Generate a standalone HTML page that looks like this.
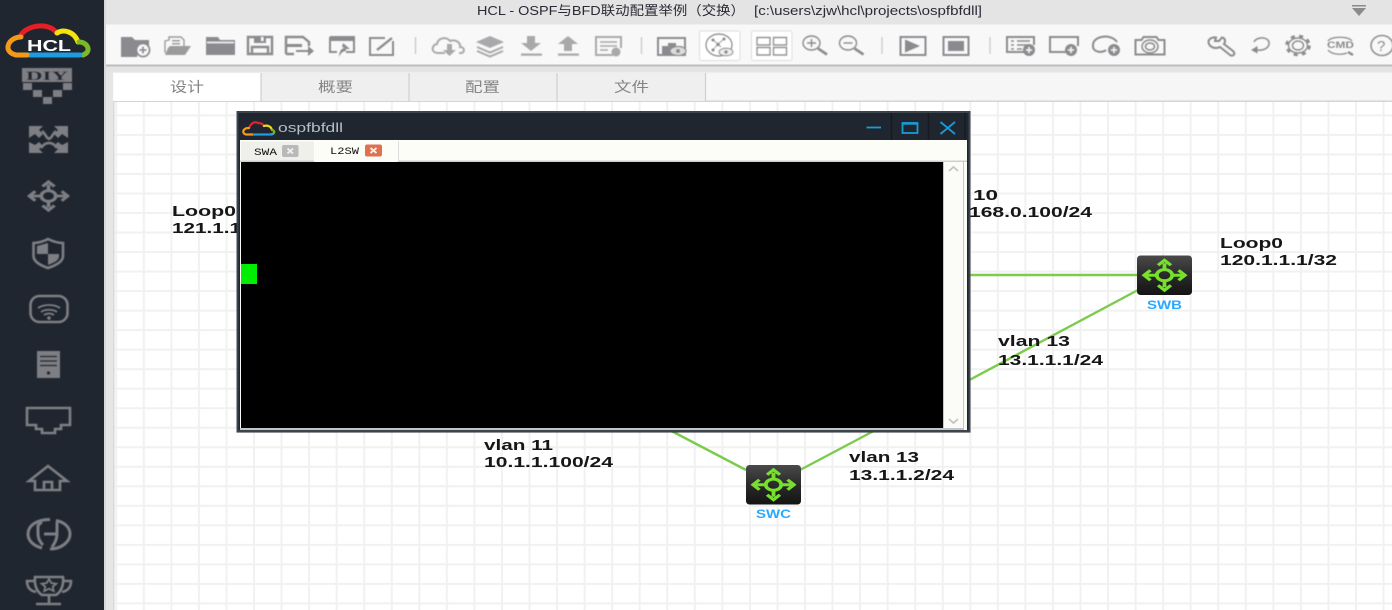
<!DOCTYPE html>
<html><head><meta charset="utf-8"><title>HCL</title>
<style>
html,body{margin:0;padding:0;background:#fff;width:1392px;height:610px;overflow:hidden}
svg{display:block}
text{font-family:"Liberation Sans","Noto Sans CJK SC",sans-serif}
.lb{font-weight:bold;font-size:15px;fill:#161616;letter-spacing:0}
.tab{font-size:14px;fill:#858585}
.ic{fill:none;stroke:#8b8b8f;stroke-width:2}
.f{fill:#8b8b8f;stroke:none}
.s{fill:none;stroke:#7d7f84;stroke-width:2.6}
.sf{fill:#7d7f84;stroke:none}
.ln{stroke:#7ccb4c;stroke-width:2.4;fill:none}
</style></head><body>
<svg width="1392" height="610" viewBox="0 0 1392 610" xmlns="http://www.w3.org/2000/svg">
<defs>
<linearGradient id="dev" x1="0" y1="0" x2="0" y2="1"><stop offset="0" stop-color="#4a4a4a"/><stop offset=".5" stop-color="#2a2a2a"/><stop offset="1" stop-color="#141414"/></linearGradient>
<filter id="b"><feGaussianBlur stdDeviation="0.45"/></filter>
<filter id="t"><feGaussianBlur stdDeviation="0.3"/></filter>
<pattern id="grid" x="142.8" y="212" width="27.55" height="19.52" patternUnits="userSpaceOnUse">
<rect width="27.55" height="19.52" fill="#fff"/>
<rect x="0" width="2" height="19.52" fill="#f1f1f1"/><rect y="0" width="27.55" height="2" fill="#f1f1f1"/>
</pattern>
<g id="mv">
<ellipse cx="0" cy="0" rx="6" ry="5.6" fill="none" stroke="currentColor" stroke-width="3"/>
<path d="M0-6V-12M0 6V12M-6 0H-14M6 0H14" stroke="currentColor" stroke-width="3" fill="none"/>
<path d="M-6-11 0-17 6-11 4-9 0-13-4-9ZM-6 11 0 17 6 11 4 9 0 13-4 9ZM-12-6-18 0-12 6-10 4-14 0-10-4ZM12-6 18 0 12 6 10 4 14 0 10-4Z" fill="currentColor"/>
</g>
<g id="sw">
<rect x="0" y="0" width="55" height="39.5" rx="3.5" fill="url(#dev)"/>
<g transform="translate(27.5,19.7) scale(1.28,1)" style="color:#76e02c"><use href="#mv"/></g>
</g>
</defs>

<!-- backgrounds -->
<rect x="104" y="0" width="1288" height="610" fill="#e6e6e6"/>
<rect x="104" y="0" width="1288" height="24.5" fill="#e4e4e4"/>
<rect x="104" y="24.5" width="1288" height="40" fill="#f8f8f8"/>
<rect x="104" y="64.5" width="1288" height="2" fill="#bdbdbd"/>
<rect x="104" y="66.5" width="1288" height="6" fill="#e4e4e4"/>
<rect x="113" y="72.5" width="1279" height="29" fill="#f6f6f6"/>
<rect x="113" y="101" width="1279" height="509" fill="url(#grid)"/>
<rect x="113" y="100.5" width="1279" height="1.5" fill="#d4d4d4"/>
<rect x="113" y="101" width="1.5" height="509" fill="#d8d8d8"/>
<rect x="104" y="0" width="2" height="610" fill="#d8d8d8"/>

<!-- tabs -->
<rect x="113.500" y="73" width="147.500" height="28" fill="#fff"/>
<rect x="261" y="73" width="444.500" height="28" fill="#efefef"/>
<path d="M261 73V101M409 73V101M557 73V101M705.500 73V101" stroke="#cfcfcf" stroke-width="1.2"/>
<text class="tab" x="170" y="92" textLength="34" lengthAdjust="spacingAndGlyphs" filter="url(#t)">设计</text>
<text class="tab" x="318" y="92" textLength="35" lengthAdjust="spacingAndGlyphs" filter="url(#t)">概要</text>
<text class="tab" x="465" y="92" textLength="35" lengthAdjust="spacingAndGlyphs" filter="url(#t)">配置</text>
<text class="tab" x="614" y="92" textLength="35" lengthAdjust="spacingAndGlyphs" filter="url(#t)">文件</text>

<!-- title -->
<text x="477" y="15" font-size="13" fill="#2c2c36" textLength="268" lengthAdjust="spacingAndGlyphs" filter="url(#t)">HCL - OSPF与BFD联动配置举例（交换）</text>
<text x="754" y="15" font-size="13" fill="#2c2c36" textLength="228" lengthAdjust="spacingAndGlyphs" filter="url(#t)">[c:\users\zjw\hcl\projects\ospfbfdll]</text>
<path d="M1352 5h14v1.500h-14zM1352 8h14l-7 8z" fill="#8b8b8f"/>

<!-- toolbar icons -->
<g filter="url(#b)">
<path class="f" d="M121 37h11l3 3h14v11h-7a7 7 0 0 0-5 6h-16z"/>
<circle cx="143" cy="50" r="6.500" fill="#f8f8f8" stroke="#8b8b8f" stroke-width="1.800"/><path d="M139.500 50h7M143 46.500v7" stroke="#8b8b8f" stroke-width="1.800"/>
<g opacity=".85"><path class="ic" style="stroke-width:1.400" d="M165 53V41l4-1V37h12l3 3v6"/><path class="f" d="M170 46h21l-6 9h-20l3-7z"/><path class="f" d="M172 40h8v1.500h-8zM172 43h8v1.500h-8z"/></g>
<path class="f" d="M206 37h12l2 3h15v15h-29zM208 42v0"/><path d="M207 42.500h27" stroke="#f8f8f8" stroke-width="1.500"/>
<path class="ic" style="stroke-width:2.400" d="M248 37h24v17h-24zM252 54v-7h16v7"/><rect class="f" x="254" y="36" width="12" height="7"/><rect x="261" y="37" width="2.500" height="4" fill="#f8f8f8"/>
<path class="ic" style="stroke-width:2.400" d="M286 54V37h17l6 5v4M286 54h8"/><path d="M287 45.500h15" class="ic" style="stroke-width:3"/><path d="M296 51h14" class="ic"/><path class="f" d="M308 46l6 5-6 5z"/>
<path class="ic" d="M330 37h24v15h-8M330 37v15h7"/><rect class="f" x="330" y="36.500" width="24" height="4.500"/><path class="f" d="M343 43l7 6h-4v2c-2 0-5 1-7 6 0-5 2-9 6-9v0l-3-1z"/>
<path class="ic" d="M393 41v14h-23V38h15"/><path d="M377 50l15-12" stroke="#8b8b8f" stroke-width="2.400" fill="none"/>
<path d="M415.500 37v17" stroke="#c4c4c4" stroke-width="1.200"/>
<g opacity=".72">
<path class="ic" d="M445 53h-7c-7 0-7-8-1-9 1-6 9-8 13-3 6-2 11 2 10 6 5 0 5 6 1 6h-2"/><path class="f" d="M447 44h5v6h4l-6.500 6-6.500-6h4z"/>
<path class="f" d="M490 36l14 6-14 6-14-6z"/><path class="ic" style="stroke-width:2" d="M477 47l13 5.500 13-5.500M477 51l13 5.500 13-5.500"/>
<path class="f" d="M527 36h8v7h6l-10 8-10-8h6zM521 53.500h21v2.200h-21z"/>
<path class="f" d="M568 36l10 8h-6v7h-8v-7h-6zM558 53.500h21v2.200h-21z"/>
<path class="ic" d="M613 55h-17V37h25v11"/><path class="ic" style="stroke-width:1.500" d="M600 42h17M600 46h17M600 50h8"/><circle cx="616" cy="52" r="4.500" fill="#8b8b8f"/>
</g>
<path d="M641.500 37v17" stroke="#c4c4c4" stroke-width="1.200"/>
<path class="ic" d="M658 38h27v17h-27z"/><path class="f" d="M662 51v-5h6v-3h8v3h6v5h-3v4h-17z"/><ellipse cx="678" cy="51" rx="8" ry="4.500" fill="#dcdcdc" stroke="#8b8b8f" stroke-width="1.200"/><circle cx="678" cy="51" r="2" fill="#8b8b8f"/>
<rect x="699.500" y="31" width="40.500" height="29.500" rx="2" fill="#fff" stroke="#dcdcdc"/>
<ellipse cx="719" cy="45" rx="13" ry="11" class="ic" style="stroke-width:1.400"/><path class="ic" style="stroke-width:.9" d="M713 40l5 4 6-5M713 50l5-6 3 3"/><circle cx="713" cy="40" r="1.600" fill="#8b8b8f"/><circle cx="724" cy="39" r="1.600" fill="#8b8b8f"/><circle cx="713" cy="50" r="1.600" fill="#8b8b8f"/><circle cx="718" cy="44.500" r="1.800" fill="#8b8b8f"/><ellipse cx="726" cy="52" rx="7" ry="3.800" fill="#eee" stroke="#8b8b8f" stroke-width="1.100"/><circle cx="726" cy="52" r="1.700" fill="#8b8b8f"/>
<rect x="751.500" y="31" width="40.500" height="29.500" rx="2" fill="#fff" stroke="#dcdcdc"/>
<path class="ic" style="stroke-width:1.400" d="M757 37.500h13v7.500h-13zM773.500 37.500h13v7.500h-13zM757 47.500h13v7.500h-13zM773.500 47.500h13v7.500h-13z"/>
<ellipse cx="811.500" cy="43" rx="8.500" ry="7" class="ic" style="stroke-width:1.400"/><path class="ic" style="stroke-width:1.400" d="M807 43h9M811.500 39v8"/><path d="M818 48.500l9 6" stroke="#8b8b8f" stroke-width="2.600"/>
<ellipse cx="848" cy="43" rx="8.500" ry="7" class="ic" style="stroke-width:1.400"/><path class="ic" style="stroke-width:1.400" d="M843.500 43h9"/><path d="M854.500 48.500l9 6" stroke="#8b8b8f" stroke-width="2.600"/>
<path d="M882 37v17" stroke="#c4c4c4" stroke-width="1.200"/>
<path class="ic" d="M900.500 37h25v18h-25z"/><path class="f" d="M905 39.500l15 6.500-15 6.500z"/>
<path class="ic" d="M943.500 37h25v18h-25z"/><rect class="f" x="948" y="41" width="16" height="10"/>
<path d="M990 37v17" stroke="#c4c4c4" stroke-width="1.200"/>
<path class="ic" d="M1025 52h-18V37h27v8"/><path class="ic" style="stroke-width:1.500" d="M1011 41h3M1011 45h3M1011 49h3M1017 41h13M1017 45h11M1017 49h5"/><circle cx="1029" cy="50" r="6" fill="#8b8b8f"/><path d="M1026 50h6M1029 47v6" stroke="#f8f8f8" stroke-width="1.500"/>
<path class="ic" d="M1067 52h-17V37h28v9"/><circle cx="1071" cy="50" r="6" fill="#8b8b8f"/><path d="M1068 50h6M1071 47v6" stroke="#f8f8f8" stroke-width="1.500"/>
<path class="ic" d="M1106 50c-3 3-14 3-13-5 0-9 18-12 24-3"/><circle cx="1114" cy="50" r="6" fill="#8b8b8f"/><path d="M1111 50h6M1114 47v6" stroke="#f8f8f8" stroke-width="1.500"/>
<path class="ic" d="M1135.500 40h6l2-3h13l2 3h6v14.500h-29z"/><ellipse cx="1150" cy="46.500" rx="8" ry="6.500" class="ic" style="stroke-width:1.500"/><ellipse cx="1150" cy="46.500" rx="4.500" ry="3.500" class="ic" style="stroke-width:1.500"/>
<path class="ic" d="M1216 37.500C1211 37 1207 40 1209 44C1211 48 1216 49 1220 47L1230 55C1233 57 1236 54 1233 51L1224 44C1226 41 1225 38 1222 37.500L1219 41L1215 41Z"/>
<path class="ic" style="stroke-width:1.500" d="M1254 42c2-5 13-6 15 0 1 6-6 9-12 8"/><path class="f" d="M1251 50l6.500-4v7.500z"/>
<ellipse cx="1298" cy="45.500" rx="5.500" ry="4.500" class="ic" style="stroke-width:1.400"/><ellipse cx="1298" cy="45.500" rx="9.500" ry="7.500" class="ic" style="stroke-width:1.400"/><ellipse cx="1298" cy="45.500" rx="11.500" ry="9.500" class="ic" style="stroke-width:2.600;stroke-dasharray:4 4.400"/>
<text x="1327" y="48" font-size="9" font-weight="bold" fill="#8b8b8f" textLength="27" lengthAdjust="spacingAndGlyphs">CMD</text>
<path class="ic" style="stroke-width:1.300" d="M1328 41c4-5 20-5 24 0M1328 50c4 5 14 5 19 3"/><path d="M1348 52l5 3" stroke="#8b8b8f" stroke-width="2.400"/>
<ellipse cx="1382" cy="45.500" rx="11" ry="10" class="ic" style="stroke-width:1.500"/>
<text x="1377" y="51" font-size="15" fill="#8b8b8f">?</text>
</g>

<!-- sidebar -->
<rect x="0" y="0" width="104" height="610" fill="#20262f"/>
<g fill="none" stroke-width="5" stroke-linecap="round">
<path d="M21 35C26 26 48 21 57 33" stroke="#e41f26"/>
<path d="M57 33C63 29 74 31 78 42" stroke="#f4e40c"/>
<path d="M79 42C88 42 92 52 83 55" stroke="#7cb927"/>
<path d="M29 55H80" stroke="#1f9be0"/>
<path d="M21 37C8 37 2 52 16 55H27" stroke="#f39a1b"/>
</g>
<text x="27" y="51" font-size="16" font-weight="bold" fill="#fff" textLength="44" lengthAdjust="spacingAndGlyphs">HCL</text>
<g filter="url(#b)">
<rect x="22" y="68" width="50" height="14" fill="#7d7f84"/>
<text x="26" y="80" font-size="13" font-weight="bold" fill="#20262f" textLength="42" lengthAdjust="spacingAndGlyphs" style="font-family:'Liberation Serif',serif">DIY</text>
<path class="sf" d="M23 83h9v7h-9zM63 83h9v7h-9zM33 90h9v7h-9zM53 90h9v7h-9zM43 97h9v7h-9z"/>
<path class="sf" d="M29 126h14l-4 4 4 4-4 4-4-4-6 4zM68 126H54l4 4-4 4 4 4 4-4 6 4zM29 153h14l-4-4 4-3-4-4-4 3-6-3zM68 153H54l4-4-4-3 4-4 4 3 6-3z"/>
<path class="s" d="M42 131c4 3 3 6 7 8 4-2 3-5 7-8M41 148c3-4 5-5 8-5s5 1 8 5"/>
<g transform="translate(48.500,196) scale(1.200,.95)" style="color:#7d7f84"><use href="#mv"/></g>
<path class="s" d="M33.500 243c5 0 11-2 14.500-4 4 2 10 4 15 4v13c0 6-9 10-15 12-6-2-14.500-6-14.500-12z"/>
<path class="sf" d="M37 246l11-3v11H37zM48 254h11v2c0 5-6 7-11 9z"/>
<rect x="30.500" y="296" width="37" height="26" rx="9" class="s"/>
<path class="s" style="stroke-width:1.800" d="M38 308c6-4 16-4 22 0M41 312c4-3 12-3 16 0M44 315c3-2 7-2 10 0"/><circle cx="49" cy="318" r="1.800" fill="#7d7f84"/>
<rect class="sf" x="37" y="351" width="23" height="27"/>
<path d="M40 356.500h17M40 361h17M40 365.500h17" stroke="#20262f" stroke-width="1.500"/><circle cx="48.500" cy="373" r="1.800" fill="#20262f"/>
<path class="s" d="M27 408h43v17h-9v4h-6v4h-13v-4h-6v-4h-9z"/>
<path class="s" d="M29 481l19-15 19 15h-7v9H35v-9zM44 490v-8h8v8"/>
<path class="s" style="stroke-width:3" d="M50 519.500C36 519.500 28 526 28 534c0 7 6 12 14 14M42 522c-2 1-3 2-4 4v8c0 4 2 8 5 11M44 534h13M57 522v12c0 4-2 9-5 13M56 520.500C64 522 70 527 70 534c0 8-9 15-20 15"/>
<path class="s" d="M35 577h28c1 8-2 15-7 18H42c-5-3-8-10-7-18zM35 581H27c0 6 3 10 9 11M63 581h8c0 6-3 10-9 11M36 604h25M49 596v8"/>
<path class="s" style="stroke-width:1.800" d="M49 579l2.300 4 5 .7-3.600 3 1 4.300-4.700-2.300-4.700 2.300 1-4.300-3.600-3 5-.7z"/>
</g>

<!-- links -->
<path class="ln" d="M960 275H1140M1138 290 960 385M660 425 746 470M885 425 800 470"/>
<use href="#sw" x="1137" y="255.500"/>
<use href="#sw" x="746" y="465"/>
<text x="1147" y="309" font-size="12" font-weight="bold" fill="#2aa8ff" textLength="35" lengthAdjust="spacingAndGlyphs">SWB</text>
<text x="756" y="518" font-size="12" font-weight="bold" fill="#2aa8ff" textLength="35" lengthAdjust="spacingAndGlyphs">SWC</text>

<!-- labels -->
<g filter="url(#t)">
<text class="lb" x="172" y="216" textLength="64" lengthAdjust="spacingAndGlyphs">Loop0</text>
<text class="lb" x="172" y="233" textLength="115" lengthAdjust="spacingAndGlyphs">121.1.1.1/32</text>
<text class="lb" x="973" y="200" textLength="25" lengthAdjust="spacingAndGlyphs">10</text>
<text class="lb" x="969" y="217" textLength="123" lengthAdjust="spacingAndGlyphs">168.0.100/24</text>
<text class="lb" x="1220" y="248" textLength="63" lengthAdjust="spacingAndGlyphs">Loop0</text>
<text class="lb" x="1220" y="265" textLength="117" lengthAdjust="spacingAndGlyphs">120.1.1.1/32</text>
<text class="lb" x="998" y="346" textLength="72" lengthAdjust="spacingAndGlyphs">vlan 13</text>
<text class="lb" x="998" y="365" textLength="105" lengthAdjust="spacingAndGlyphs">13.1.1.1/24</text>
<text class="lb" x="484" y="450" textLength="69" lengthAdjust="spacingAndGlyphs">vlan 11</text>
<text class="lb" x="484" y="467" textLength="129" lengthAdjust="spacingAndGlyphs">10.1.1.100/24</text>
<text class="lb" x="849" y="462" textLength="70" lengthAdjust="spacingAndGlyphs">vlan 13</text>
<text class="lb" x="849" y="480" textLength="105" lengthAdjust="spacingAndGlyphs">13.1.1.2/24</text>
</g>

<!-- terminal window -->
<rect x="236.500" y="111" width="734" height="321.500" fill="#20262f"/>
<rect x="236.500" y="111" width="734" height="2" fill="#3e444c"/>
<path d="M237.500 113V431H969.500V113" fill="none" stroke="#3e444c" stroke-width="2"/>
<rect x="240" y="140" width="727" height="290" fill="#fdfdf7"/>
<rect x="241" y="141.500" width="73" height="20" fill="#efefeb"/>
<path d="M398.500 141V161" stroke="#dedede"/>
<rect x="240" y="160.500" width="727" height="1.500" fill="#cfcfcf"/>
<rect x="314" y="141" width="84" height="21" fill="#fdfdf7"/>
<text x="254" y="155" font-size="10" fill="#111" textLength="23" lengthAdjust="spacingAndGlyphs" style="font-family:'Liberation Mono',monospace">SWA</text>
<rect x="282" y="145" width="16.500" height="12" rx="2" fill="#b9b9b9"/><path d="M287.500 148.500l5.500 5M293 148.500l-5.500 5" stroke="#f1f1f1" stroke-width="1.800"/>
<text x="330" y="154" font-size="10" fill="#111" textLength="29" lengthAdjust="spacingAndGlyphs" style="font-family:'Liberation Mono',monospace">L2SW</text>
<rect x="365" y="144.500" width="17" height="12" rx="2" fill="#e0714f"/><path d="M370.500 148l6 5M376.500 148l-6 5" stroke="#fbeee8" stroke-width="1.800"/>
<rect x="241" y="162" width="702" height="266" fill="#000"/>
<rect x="943" y="162" width="21" height="266" fill="#fbfbf8"/>
<path d="M943.500 162V428M963.500 162V428" stroke="#c8c8c8"/>
<rect x="240" y="428" width="724" height="2" fill="#c4c4c4"/>
<path d="M949 171l4.500-4 4.500 4M949 419l4.500 4 4.500-4" fill="none" stroke="#c4c4c4" stroke-width="1.800"/>
<rect x="241" y="264" width="16" height="20" fill="#00ee00"/>
<path d="M891.500 113V140M928.500 113V140M965 113V140" stroke="#171b21" stroke-width="1.500"/>
<path d="M866.500 127.500H881" stroke="#1a9ad6" stroke-width="1.800"/>
<rect x="902.500" y="123" width="15" height="10" fill="none" stroke="#1a9ad6" stroke-width="1.800"/><path d="M902.500 123.500h15" stroke="#1a9ad6" stroke-width="2.400"/>
<path d="M940.500 122 955 134M955 122 940.500 134" stroke="#1a9ad6" stroke-width="1.800"/>
<g fill="none" stroke-width="2.200" stroke-linecap="round">
<path d="M249 128c2-5 6-7 9-5" stroke="#d8272d"/>
<path d="M258 123c3 0 5 1 6 3" stroke="#d8272d"/>
<path d="M264 126c3-1 7 0 8 4" stroke="#eadc20"/>
<path d="M272 130c3 0 3 4 0 4" stroke="#76b52a"/>
<path d="M252 134.500h20" stroke="#1f9be0"/>
<path d="M249 128c-7 0-7 6-3 6.500h6" stroke="#f39a1b"/>
</g>
<text x="278" y="132" font-size="13" fill="#b6bec8" textLength="65" lengthAdjust="spacingAndGlyphs">ospfbfdll</text>
</svg>
</body></html>
